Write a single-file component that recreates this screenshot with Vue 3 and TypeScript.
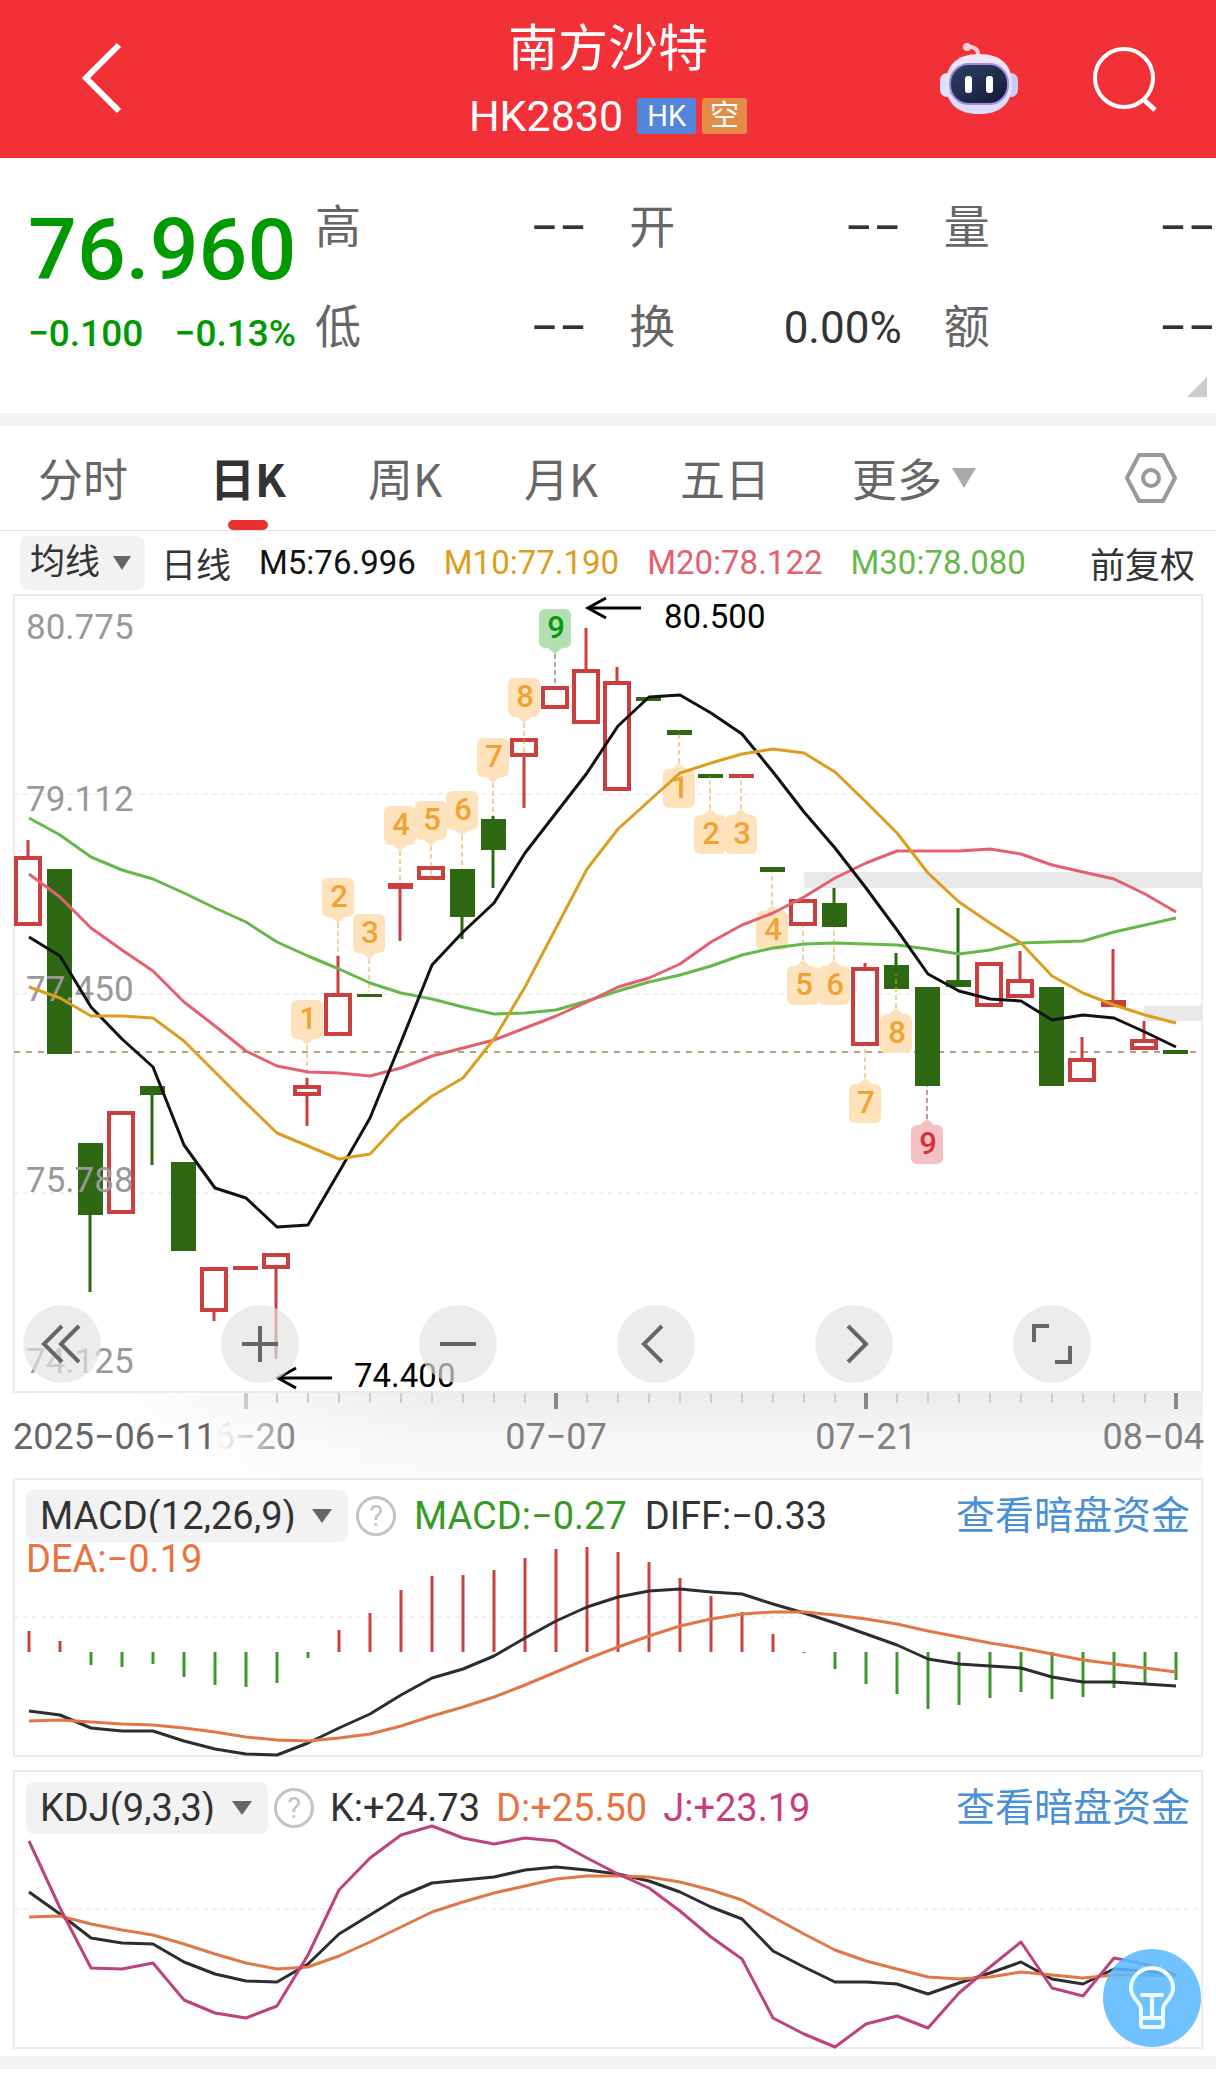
<script setup lang="ts">
import { ref } from 'vue'

type Candle = { kind: 'up' | 'down'; top: number; bottom: number; high?: number; low?: number }
type Marker = { index: number; label: string; from: number; side: 'above' | 'below'; tone: string }

const x = (i: number): number => 29 + 31 * i
const toPoints = (ys: number[]): string => ys.map((y, i) => `${x(i)},${y}`).join(' ')

const up = (top: number, bottom: number, high?: number, low?: number): Candle => ({ kind: 'up', top, bottom, high, low })
const down = (top: number, bottom: number, high?: number, low?: number): Candle => ({ kind: 'down', top, bottom, high, low })

const candles: Candle[] = [
  up(856, 926, 840), down(869, 1054), down(1143, 1215, undefined, 1292), up(1111, 1214),
  down(1086, 1095, undefined, 1165), down(1162, 1251), up(1267, 1312, undefined, 1321), up(1266, 1270),
  up(1253, 1269, undefined, 1359), up(1085, 1096, 1078, 1126), up(993, 1036, 956), down(994, 997),
  up(883, 889, undefined, 941), up(866, 880), down(869, 917, undefined, 939), down(819, 850, 816, 888),
  up(738, 757, undefined, 808), up(686, 709), up(669, 724, 628), up(681, 791, 667),
  down(697, 701), down(730, 735), down(774, 778), up(774, 778),
  down(867, 872), up(899, 926), down(903, 927, 888), up(967, 1046, 963),
  down(965, 989, 953), down(987, 1086), down(980, 987, 908), up(962, 1007),
  up(979, 998, 951), down(987, 1086), up(1058, 1082, 1037), up(1000, 1007, 949),
  up(1039, 1050, 1021), down(1050, 1054),
]

const markers: Marker[] = [
  { index: 9, label: '1', from: 1078, side: 'above', tone: 'amber' },
  { index: 10, label: '2', from: 956, side: 'above', tone: 'amber' },
  { index: 11, label: '3', from: 992, side: 'above', tone: 'amber' },
  { index: 12, label: '4', from: 884, side: 'above', tone: 'amber' },
  { index: 13, label: '5', from: 879, side: 'above', tone: 'amber' },
  { index: 14, label: '6', from: 869, side: 'above', tone: 'amber' },
  { index: 15, label: '7', from: 816, side: 'above', tone: 'amber' },
  { index: 16, label: '8', from: 756, side: 'above', tone: 'amber' },
  { index: 17, label: '9', from: 687, side: 'above', tone: 'green' },
  { index: 21, label: '1', from: 730, side: 'below', tone: 'amber' },
  { index: 22, label: '2', from: 776, side: 'below', tone: 'amber' },
  { index: 23, label: '3', from: 776, side: 'below', tone: 'amber' },
  { index: 24, label: '4', from: 872, side: 'below', tone: 'amber' },
  { index: 25, label: '5', from: 927, side: 'below', tone: 'amber' },
  { index: 26, label: '6', from: 927, side: 'below', tone: 'amber' },
  { index: 27, label: '7', from: 1045, side: 'below', tone: 'amber' },
  { index: 28, label: '8', from: 975, side: 'below', tone: 'amber' },
  { index: 29, label: '9', from: 1086, side: 'below', tone: 'red' },
]
const tip = (m: Marker): number => (m.side === 'above' ? m.from - 33 : m.from + 33)
const bubbleTop = (m: Marker): number => (m.side === 'above' ? tip(m) - 45 : tip(m) + 6)
const pointer = (m: Marker): string => {
  const d = m.side === 'above' ? -6 : 6
  return `${x(m.index) - 8},${tip(m) + d} ${x(m.index) - 1},${tip(m)} ${x(m.index) + 6},${tip(m) + d}`
}

const averages = [
  { name: 'ma30', ys: [818, 835, 857, 870, 879, 893, 908, 922, 942, 956, 969, 983, 993, 999, 1007, 1014, 1013, 1010, 1001, 991, 982, 975, 966, 955, 948, 944, 943, 944, 945, 949, 954, 950, 943, 942, 941, 932, 925, 918] },
  { name: 'ma20', ys: [874, 897, 928, 950, 971, 1002, 1026, 1051, 1066, 1072, 1073, 1076, 1068, 1056, 1048, 1040, 1028, 1016, 1002, 987, 978, 964, 942, 925, 913, 897, 878, 863, 851, 851, 851, 849, 854, 865, 872, 879, 894, 912] },
  { name: 'ma5', ys: [937, 956, 1007, 1039, 1067, 1145, 1188, 1198, 1227, 1225, 1172, 1118, 1042, 965, 932, 903, 853, 813, 773, 726, 697, 695, 713, 734, 772, 812, 848, 888, 930, 974, 991, 999, 1001, 1020, 1015, 1018, 1032, 1047] },
  { name: 'ma10', ys: [987, 998, 1016, 1016, 1018, 1041, 1072, 1103, 1133, 1146, 1159, 1154, 1121, 1096, 1078, 1039, 987, 928, 869, 829, 801, 773, 763, 754, 749, 753, 772, 802, 833, 873, 902, 923, 943, 976, 993, 1005, 1015, 1023] },
]

const priceLabels = [
  { text: '80.775', y: 639 }, { text: '79.112', y: 811 }, { text: '77.450', y: 1001 },
  { text: '75.788', y: 1192 }, { text: '74.125', y: 1373 },
]
const ticks = Array.from({ length: 31 }, (_, n) => n + 7)

const macdBars = [1631, 1641, 1665, 1667, 1664, 1677, 1685, 1687, 1683, 1658, 1630, 1613, 1590, 1576, 1575, 1570, 1558, 1549, 1547, 1552, 1562, 1578, 1596, 1612, 1634, 1653, 1669, 1684, 1694, 1709, 1705, 1698, 1692, 1699, 1697, 1688, 1683, 1680]
const macdZero = 1652
const diff = [1711, 1715, 1728, 1731, 1731, 1741, 1749, 1754, 1755, 1743, 1728, 1714, 1695, 1678, 1669, 1656, 1638, 1621, 1607, 1597, 1591, 1589, 1592, 1594, 1604, 1613, 1623, 1634, 1645, 1659, 1664, 1666, 1668, 1677, 1682, 1682, 1684, 1686]
const dea = [1721, 1720, 1722, 1724, 1725, 1728, 1732, 1737, 1740, 1741, 1738, 1734, 1726, 1716, 1707, 1697, 1685, 1672, 1659, 1647, 1636, 1626, 1619, 1614, 1612, 1612, 1615, 1619, 1624, 1631, 1637, 1643, 1648, 1654, 1660, 1664, 1668, 1672]
const kLine = [1892, 1914, 1938, 1943, 1944, 1962, 1974, 1981, 1982, 1964, 1934, 1915, 1896, 1883, 1880, 1877, 1870, 1867, 1870, 1874, 1881, 1892, 1907, 1919, 1951, 1967, 1982, 1982, 1984, 1994, 1983, 1973, 1962, 1979, 1984, 1969, 1971, 1975]
const dLine = [1917, 1916, 1924, 1930, 1935, 1944, 1954, 1963, 1969, 1967, 1956, 1942, 1927, 1912, 1902, 1893, 1886, 1879, 1876, 1876, 1877, 1882, 1890, 1900, 1917, 1934, 1950, 1961, 1969, 1977, 1979, 1977, 1972, 1975, 1978, 1975, 1975, 1976]
const jLine = [1841, 1908, 1968, 1969, 1963, 2000, 2013, 2018, 2006, 1955, 1890, 1858, 1835, 1826, 1838, 1844, 1838, 1841, 1858, 1874, 1888, 1911, 1937, 1959, 2018, 2034, 2047, 2024, 2016, 2028, 1993, 1967, 1942, 1988, 1996, 1958, 1964, 1975]

const stats = [
  { label: '高', value: '−−' }, { label: '开', value: '−−' }, { label: '量', value: '−−' },
  { label: '低', value: '−−' }, { label: '换', value: '0.00%' }, { label: '额', value: '−−' },
]

const tabs = ['分时', '日K', '周K', '月K', '五日']
const activeTab = ref('日K')

const tools = [
  { name: '最早', d: 'M20 2 2 20 20 38M37 2 19 20 37 38' },
  { name: '放大', d: 'M20 2V38M2 20H38' },
  { name: '缩小', d: 'M2 20H38' },
  { name: '向前', d: 'M26 2 8 20 26 38' },
  { name: '向后', d: 'M14 2 32 20 14 38' },
  { name: '全屏', d: 'M2 18V2H17M23 38H38V22' },
]
</script>

<template>
  <main class="page">
    <header class="topbar">
      <button class="icon-button back" type="button" aria-label="返回">
        <svg width="44" height="74" viewBox="0 0 44 74"><path d="M39 3 6 36 39 69" fill="none" stroke="#fff" stroke-width="6" /></svg>
      </button>
      <div class="heading">
        <h1>南方沙特</h1>
        <p class="code">HK2830 <span class="badge hk">HK</span><span class="badge short">空</span></p>
      </div>
      <div class="actions">
        <button class="icon-button" type="button" aria-label="助手">
          <svg width="78" height="74" viewBox="0 0 78 74">
            <defs>
              <linearGradient id="shell" x1="0" y1="0" x2="0" y2="1"><stop offset="0" stop-color="#f3e6f8" /><stop offset="1" stop-color="#d9dcfb" /></linearGradient>
              <linearGradient id="visor" x1="0" y1="0" x2="1" y2="1"><stop offset="0" stop-color="#2f4163" /><stop offset="1" stop-color="#12193a" /></linearGradient>
            </defs>
            <path d="M38 14C39 8 34 4 28 5" fill="none" stroke="#f6c9dc" stroke-width="4" />
            <circle cx="27" cy="5" r="4" fill="#f8d0de" />
            <rect x="0" y="31" width="14" height="24" rx="7" fill="#dfe0fb" />
            <rect x="64" y="31" width="14" height="24" rx="7" fill="#c9cbf5" />
            <path d="M39 12C62 12 72 24 72 42C72 62 60 72 39 72S6 62 6 42C6 24 16 12 39 12Z" fill="url(#shell)" />
            <rect x="10" y="22" width="58" height="40" rx="19" fill="url(#visor)" stroke="#a48be0" stroke-width="2" />
            <rect x="25" y="34" width="7" height="17" rx="3" fill="#fff" />
            <rect x="46" y="34" width="7" height="17" rx="3" fill="#fff" />
          </svg>
        </button>
        <button class="icon-button" type="button" aria-label="搜索">
          <svg width="66" height="66" viewBox="0 0 66 66"><g fill="none" stroke="#fff" stroke-width="4"><circle cx="32" cy="32" r="29" /><path d="M51 53 63 64" stroke-width="5" /></g></svg>
        </button>
      </div>
    </header>

    <section class="quote">
      <div class="price-block">
        <strong class="price">76.960</strong>
        <p class="change"><span>−0.100</span><span>−0.13%</span></p>
      </div>
      <dl class="stats">
        <div v-for="s in stats" :key="s.label" class="stat"><dt>{{ s.label }}</dt><dd :class="{ empty: s.value === '−−' }">{{ s.value }}</dd></div>
      </dl>
      <svg class="corner" width="20" height="20" viewBox="0 0 20 20"><path d="M20 0V20H0Z" fill="#ccc" /></svg>
    </section>

    <nav class="tabs">
      <button v-for="t in tabs" :key="t" type="button" class="tab" :class="{ active: t === activeTab }" @click="activeTab = t">{{ t }}</button>
      <button type="button" class="tab more">更多<svg width="24" height="20" viewBox="0 0 24 20"><path d="M0 0H24L12 20Z" fill="#aaa" /></svg></button>
      <button type="button" class="icon-button settings" aria-label="设置">
        <svg width="54" height="52" viewBox="0 0 54 52"><g fill="none" stroke="#999" stroke-width="4" stroke-linejoin="round"><path d="M15 3H39L51 26 39 49H15L3 26Z" /><circle cx="27" cy="26" r="8" /></g></svg>
      </button>
    </nav>

    <div class="ma-row">
      <label class="picker small">
        <select aria-label="指标"><option>均线</option></select>
        <svg width="18" height="14" viewBox="0 0 18 14"><path d="M0 0H18L9 14Z" /></svg>
      </label>
      <span class="period">日线</span>
      <span class="t5">M5:76.996</span>
      <span class="t10">M10:77.190</span>
      <span class="t20">M20:78.122</span>
      <span class="t30">M30:78.080</span>
      <button type="button" class="adjust">前复权</button>
    </div>

    <section class="stack">
      <svg class="chart" viewBox="0 594 1216 884" role="img" aria-label="日K线图">
        <defs>
          <linearGradient id="fadeIn" gradientUnits="userSpaceOnUse" x1="217" y1="0" x2="290" y2="0"><stop offset="0" stop-color="#888" stop-opacity="0" /><stop offset="1" stop-color="#888" /></linearGradient>
          <linearGradient id="axisShade" x1="0" y1="0" x2="0" y2="1"><stop offset="0" stop-color="#ececec" /><stop offset="0.6" stop-color="#f8f8f8" /><stop offset="1" stop-color="#fafafa" /></linearGradient>
          <linearGradient id="axisVeil" x1="0" y1="0" x2="1" y2="0"><stop offset="0" stop-color="#fff" /><stop offset="0.3" stop-color="#fff" stop-opacity="0.85" /><stop offset="1" stop-color="#fff" stop-opacity="0" /></linearGradient>
        </defs>
        <rect x="13" y="1393" width="1190" height="85" fill="url(#axisShade)" />
        <rect x="13" y="1393" width="440" height="85" fill="url(#axisVeil)" />
        <rect class="frame" x="14" y="595" width="1188" height="797" />
        <path class="gap" d="M804 872H1202V888H804ZM1144 1006H1202V1021H1144Z" />
        <path class="grid" d="M14 794H1202M14 994H1202M14 1193H1202" />
        <path class="last" d="M14 1052H1202" />

        <g v-for="(c, i) in candles" :key="i" :class="c.kind">
          <path v-if="c.high" class="wick" :d="`M${x(i) - 1} ${c.high}V${c.top}`" />
          <path v-if="c.low" class="wick" :d="`M${x(i) - 1} ${c.bottom}V${c.low}`" />
          <rect v-if="c.kind === 'up' && c.bottom - c.top > 8" class="hollow" :x="x(i) - 13" :y="c.top + 2" width="24" :height="c.bottom - c.top - 4" />
          <rect v-else class="solid" :x="x(i) - 13" :y="c.top" width="25" :height="c.bottom - c.top" />
        </g>

        <g v-for="m in markers" :key="`${m.index}m`" :class="['marker', m.tone]">
          <path :d="`M${x(m.index) - 1} ${tip(m)}V${m.from}`" />
          <polygon :points="pointer(m)" />
          <rect :x="x(m.index) - 17" :y="bubbleTop(m)" width="32" height="39" rx="6" />
          <text :x="x(m.index)" :y="bubbleTop(m) + 29">{{ m.label }}</text>
        </g>

        <text v-for="p in priceLabels" :key="p.text" class="axis-price" x="26" :y="p.y">{{ p.text }}</text>
        <polyline v-for="a in averages" :key="a.name" :class="['line', a.name]" :points="toPoints(a.ys)" />

        <g class="callout">
          <path d="M641 608H588M606 598 588 608 606 618M332 1378H279M296 1368 278 1378 296 1388" />
          <text x="664" y="628">80.500</text>
          <text x="354" y="1387">74.400</text>
        </g>

        <g v-for="t in ticks" :key="`${t}t`">
          <path v-if="t % 10 === 7" :class="['major', { faded: t === 7 }]" :d="`M${x(t)} 1393V1409`" />
          <path v-else class="minor" :d="`M${x(t)} 1393V1403`" />
        </g>
        <g class="dates">
          <text class="first" x="13" y="1449">2025−06−11</text>
          <text x="296" y="1449" text-anchor="end" fill="url(#fadeIn)">6−20</text>
          <text x="556" y="1449" text-anchor="middle">07−07</text>
          <text x="866" y="1449" text-anchor="middle">07−21</text>
          <text x="1204" y="1449" text-anchor="end">08−04</text>
        </g>
      </svg>
      <div class="tools">
        <button v-for="t in tools" :key="t.name" type="button" :aria-label="t.name">
          <svg width="40" height="40" viewBox="0 0 40 40" overflow="visible"><path :d="t.d" fill="none" stroke="#666" stroke-width="4" /></svg>
        </button>
      </div>
    </section>

    <section class="stack">
      <svg class="chart" viewBox="0 1478 1216 292" role="img" aria-label="MACD">
        <rect class="frame" x="14" y="1479" width="1188" height="277" />
        <path class="grid" d="M14 1617H1202" />
        <path v-for="(b, i) in macdBars" :key="i" :class="['bar', b < macdZero ? 'rise' : 'fall']" :d="`M${x(i)} ${macdZero}V${b}`" />
        <polyline class="line dark" :points="toPoints(diff)" />
        <polyline class="line orange" :points="toPoints(dea)" />
      </svg>
      <div class="indicator">
        <label class="picker">
          <select aria-label="MACD 参数"><option>MACD(12,26,9)</option></select>
          <svg width="20" height="14" viewBox="0 0 20 14"><path d="M0 0H20L10 14Z" /></svg>
        </label>
        <button type="button" class="help" aria-label="说明">?</button>
        <span class="value macd">MACD:−0.27</span>
        <span class="value">DIFF:−0.33</span>
        <a href="#">查看暗盘资金</a>
        <span class="value dea">DEA:−0.19</span>
      </div>
    </section>

    <section class="stack">
      <svg class="chart" viewBox="0 1770 1216 286" role="img" aria-label="KDJ">
        <rect class="frame" x="14" y="1771" width="1188" height="277" />
        <path class="grid" d="M14 1909H1202" />
        <polyline class="line dark" :points="toPoints(kLine)" />
        <polyline class="line orange" :points="toPoints(dLine)" />
        <polyline class="line magenta" :points="toPoints(jLine)" />
      </svg>
      <div class="indicator kdj">
        <label class="picker">
          <select aria-label="KDJ 参数"><option>KDJ(9,3,3)</option></select>
          <svg width="20" height="14" viewBox="0 0 20 14"><path d="M0 0H20L10 14Z" /></svg>
        </label>
        <button type="button" class="help" aria-label="说明">?</button>
        <span class="value">K:+24.73</span>
        <span class="value dea">D:+25.50</span>
        <span class="value j">J:+23.19</span>
        <a href="#">查看暗盘资金</a>
      </div>
      <button type="button" class="bulb" aria-label="提示">
        <svg width="48" height="64" viewBox="0 0 48 64">
          <g fill="none" stroke="#eefcff" stroke-width="4" stroke-linejoin="round" stroke-linecap="round">
            <path d="M13 43C13 36 3 33 3 22A21 20 0 0 1 45 22C45 33 35 36 35 43V59Q35 61 33 61H15Q13 61 13 59Z" />
            <path d="M14 29H34M24 29V51M14 52H34" />
          </g>
        </svg>
      </button>
    </section>
    <div class="band"></div>
  </main>
</template>

<style>
body { background: #fff; }
</style>

<style scoped>
.page { font-family: Roboto, "Noto Sans CJK SC", sans-serif; color: #333; background: #fff; }
h1, p, dl, dd { margin: 0; }
button, select { font: inherit; color: inherit; border: 0; background: none; padding: 0; margin: 0; }
button { cursor: pointer; }
svg { display: block; }
.icon-button { display: flex; }

.topbar { display: grid; grid-template-columns: 1fr auto 1fr; align-items: center; height: 158px; padding: 0 58px 0 80px; background: #f23037; color: #fff; box-sizing: border-box; }
.heading { text-align: center; margin-left: -22px; padding-top: 8px; }
h1 { font-size: 50px; line-height: 66px; font-weight: 400; font-family: "Noto Sans CJK SC", sans-serif; }
.code { display: flex; align-items: center; justify-content: center; gap: 6px; font-size: 43px; line-height: 78px; }
.badge { font-size: 29px; line-height: 36px; height: 36px; border-radius: 3px; padding: 0 10px; }
.badge.hk { background: #5385da; margin-left: 8px; }
.badge.short { background: #e38b47; padding: 0 8px; }
.actions { display: flex; align-items: center; justify-content: flex-end; gap: 74px; }

.quote { display: flex; position: relative; height: 255px; border-bottom: 13px solid #f4f4f4; }
.price-block { width: 287px; padding-left: 28px; padding-top: 42px; color: #009900; }
.price { display: block; font-size: 86px; line-height: 100px; font-weight: 500; }
.change { display: flex; justify-content: space-between; width: 268px; font-size: 37px; font-weight: 500; line-height: 68px; }
.stats { flex: 1; display: grid; grid-template-columns: repeat(3, 1fr); grid-auto-rows: 100px; column-gap: 42px; padding-top: 20px; }
.stat { display: flex; justify-content: space-between; align-items: center; }
.stat dt { font-size: 46px; line-height: 68px; padding-bottom: 2px; color: #666; }
.stat dd { font-size: 44px; }
.stat .empty { font-size: 50px; }
.corner { position: absolute; right: 9px; bottom: 16px; }

.tabs { display: flex; align-items: center; gap: 82px; height: 104px; padding: 0 38px 0 38px; border-bottom: 1px solid #e2e2e2; }
.tab { position: relative; font: 45px/104px "Noto Sans CJK SC", sans-serif; color: #666; white-space: nowrap; }
.tab.active { font-weight: 700; color: #333; }
.tab.active::after { content: ""; position: absolute; left: 50%; bottom: 0; width: 40px; height: 10px; margin-left: -20px; border-radius: 5px; background: #e93030; }
.more { display: flex; align-items: center; gap: 10px; }
.settings { margin-left: auto; }

.ma-row { display: flex; align-items: center; gap: 28px; height: 63px; padding: 0 21px 0 20px; font-size: 33px; white-space: nowrap; }
.picker { display: flex; align-items: center; background: #f2f2f2; border-radius: 8px; fill: #666; }
.picker select { appearance: none; outline: 0; }
.picker.small { gap: 12px; height: 54px; padding: 0 14px 0 10px; font-size: 35px; }
.period { font-size: 35px; margin-left: -12px; }
.t5 { color: #111; }
.t10 { color: #dc9e20; }
.t20 { color: #e5606f; }
.t30 { color: #66b84a; }
.adjust { margin-left: auto; font-size: 35px; }

.stack { display: grid; position: relative; }
.stack > * { grid-area: 1 / 1; }
.chart { width: 100%; height: auto; font-family: Roboto, "Noto Sans CJK SC", sans-serif; }
.frame { fill: none; stroke: #ebebeb; stroke-width: 2; }
.grid { stroke: #e2e2e2; stroke-width: 1; stroke-dasharray: 5 4; fill: none; }
.gap { fill: #e9e9e9; }
.last { stroke: #b5a37f; stroke-width: 2; stroke-dasharray: 6 6; }
.wick { stroke-width: 3; }
.up { stroke: #cc3d3d; }
.up .hollow { fill: #fff; stroke-width: 4; }
.up .solid { fill: #cc3d3d; stroke: none; }
.down { stroke: #2f6812; }
.down .solid { fill: #2f6812; stroke: none; }
.marker path { stroke: #dda83c; stroke-width: 1; stroke-dasharray: 5 3; }
.marker rect, .marker polygon { fill: #fee2bb; }
.marker text { font-size: 31px; font-weight: 500; text-anchor: middle; fill: #f0a232; }
.marker.green path { stroke: #2f7a2f; }
.marker.green rect, .marker.green polygon { fill: #b2e0b4; }
.marker.green text { fill: #0a960a; }
.marker.red path { stroke: #8a3040; }
.marker.red rect, .marker.red polygon { fill: #f6c0c2; }
.marker.red text { fill: #d03438; }
.axis-price { font-size: 35px; fill: #999; }
.line { fill: none; stroke-width: 3; stroke-linejoin: round; }
.ma5 { stroke: #111; }
.ma10 { stroke: #dc9e20; }
.ma20 { stroke: #e5606f; }
.ma30 { stroke: #66b84a; }
.dark { stroke: #2d2d2d; }
.orange { stroke: #e07746; }
.magenta { stroke: #bd427d; }
.callout path { fill: none; stroke: #000; stroke-width: 3; }
.callout text { font-size: 33px; fill: #000; }
.minor { stroke: #ccc; stroke-width: 2; }
.major { stroke: #888; stroke-width: 4; }
.major.faded { stroke: #ccc; }
.dates { font-size: 36px; fill: #808080; }
.dates .first { fill: #666; }
.bar { stroke-width: 3; }
.rise { stroke: #cc4040; }
.fall { stroke: #3f962f; }

.tools { align-self: end; display: flex; justify-content: space-between; padding: 0 125px 95px 23px; }
.tools button { display: grid; place-items: center; width: 78px; height: 78px; border-radius: 50%; background: rgba(227, 227, 227, 0.68); }

.indicator { align-self: start; display: flex; flex-wrap: wrap; align-items: center; column-gap: 18px; padding: 12px 26px 0 26px; font-size: 38px; line-height: 34px; }
.indicator.kdj { column-gap: 16px; }
.indicator .picker { gap: 16px; height: 52px; padding: 0 16px 0 14px; }
.indicator .help { width: 40px; height: 40px; margin-left: -10px; border: 3px solid #c4c4c4; border-radius: 50%; color: #c4c4c4; font-size: 29px; line-height: 34px; }
.indicator a { margin-left: auto; font-size: 39px; color: #4a90d9; text-decoration: none; }
.value.macd { color: #379a25; }
.value.dea { color: #e97340; }
.value.j { color: #c73e7c; }

.bulb { place-self: end; display: grid; place-items: center; width: 98px; height: 98px; margin: 0 15px 9px 0; border-radius: 50%; background: rgba(92, 185, 255, 0.88); }
.band { height: 13px; background: #f4f4f4; }
</style>
